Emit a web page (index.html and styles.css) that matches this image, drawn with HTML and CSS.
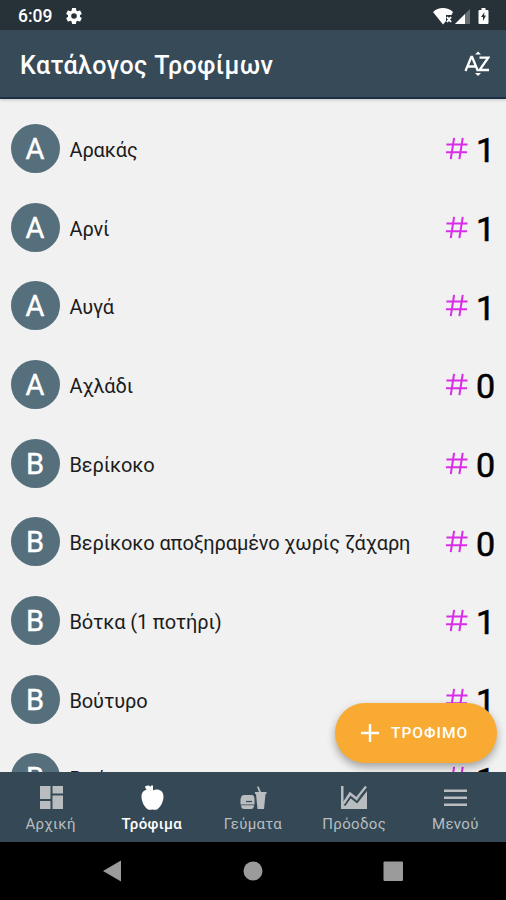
FILE: index.html
```
<!DOCTYPE html>
<html lang="el">
<head>
<meta charset="utf-8">
<title>Κατάλογος Τροφίμων</title>
<link rel="stylesheet" href="styles.css">
</head>
<body>
<svg class="defs" width="0" height="0">
  <symbol id="hash" viewBox="0 0 24 24"><path d="M9.500 1 6 23M18.500 1 15 23M1.500 7.800h22M1 16h22" fill="none" stroke="currentColor" stroke-width="2.100"/></symbol>
</svg>
<div class="status">
  <span class="clock">6:09</span>
  <svg class="gear" viewBox="2 2 20 20"><path d="M19.43 12.98c.04-.32.07-.64.07-.98s-.03-.66-.07-.98l2.11-1.65c.19-.15.24-.42.12-.64l-2-3.46c-.12-.22-.39-.3-.61-.22l-2.49 1c-.52-.4-1.08-.73-1.69-.98l-.38-2.65C14.46 2.18 14.25 2 14 2h-4c-.25 0-.46.18-.49.42l-.38 2.65c-.61.25-1.17.59-1.69.98l-2.49-1c-.23-.09-.49 0-.61.22l-2 3.46c-.13.22-.07.49.12.64l2.11 1.65c-.04.32-.07.65-.07.98s.03.66.07.98l-2.11 1.65c-.19.15-.24.42-.12.64l2 3.46c.12.22.39.3.61.22l2.49-1c.52.4 1.08.73 1.69.98l.38 2.65c.03.24.24.42.49.42h4c.25 0 .46-.18.49-.42l.38-2.65c.61-.25 1.17-.59 1.69-.98l2.49 1c.23.09.49 0 .61-.22l2-3.46c.12-.22.07-.49-.12-.64zM12 15.5a3.5 3.5 0 1 1 0-7 3.5 3.5 0 0 1 0 7z"/></svg>
  <svg class="signals" viewBox="0 0 58 18"><path d="M0 5C5-.2 15-.2 20 5l-1.500 3H13v6l-3 3.500z"/><path d="m14 10 4 5m0-5-4 5" stroke="#fff" stroke-width="2"/><path d="M22 17 37 2v15z" opacity=".3"/><path d="M22 17 32 7v10z"/><path d="M48.500 1h4v2h2q1 0 1 1v12q0 1-1 1h-8q-1 0-1-1V4q0-1 1-1h2z"/><path d="m51.500 5-3.500 5h2v4l3-5.500h-2z" fill="#263238"/></svg>
</div>
<header class="appbar">
  <h1>Κατάλογος Τροφίμων</h1>
  <svg class="sort" viewBox="0 0 26 26"><path d="M1.500 20 7.300 6h.8l5.800 14M3.800 15.500h7.800M15.500 6.700h8.700L15.500 19h9.500" fill="none" stroke="#fff" stroke-width="2.300"/><path d="m11 3.500 3-3 3 3zM11 22l3 3 3-3z" fill="#fff"/></svg>
</header>
<main class="foods">
  <div class="row"><span class="avatar">A</span><span class="name">Αρακάς</span><svg class="hash"><use href="#hash"/></svg><span class="count">1</span></div>
  <div class="row"><span class="avatar">A</span><span class="name">Αρνί</span><svg class="hash"><use href="#hash"/></svg><span class="count">1</span></div>
  <div class="row"><span class="avatar">A</span><span class="name">Αυγά</span><svg class="hash"><use href="#hash"/></svg><span class="count">1</span></div>
  <div class="row"><span class="avatar">A</span><span class="name">Αχλάδι</span><svg class="hash"><use href="#hash"/></svg><span class="count">0</span></div>
  <div class="row"><span class="avatar">B</span><span class="name">Βερίκοκο</span><svg class="hash"><use href="#hash"/></svg><span class="count">0</span></div>
  <div class="row"><span class="avatar">B</span><span class="name">Βερίκοκο αποξηραμένο χωρίς ζάχαρη</span><svg class="hash"><use href="#hash"/></svg><span class="count">0</span></div>
  <div class="row"><span class="avatar">B</span><span class="name">Βότκα (1 ποτήρι)</span><svg class="hash"><use href="#hash"/></svg><span class="count">1</span></div>
  <div class="row"><span class="avatar">B</span><span class="name">Βούτυρο</span><svg class="hash"><use href="#hash"/></svg><span class="count">1</span></div>
  <div class="row"><span class="avatar">B</span><span class="name">Βρώμη</span><svg class="hash"><use href="#hash"/></svg><span class="count">1</span></div>
  <button class="fab"><svg viewBox="0 0 18 18"><path d="M9 0v18M0 9h18" stroke="#fff" stroke-width="2.400"/></svg><span>ΤΡΟΦΙΜΟ</span></button>
</main>
<nav class="tabs">
  <a class="tab"><svg viewBox="0 0 28 28"><path d="M3 3h10.500v13H3zM15.500 3H26v7.500H15.500zM3 18h10.500v8H3zM15.500 12.500H26V26H15.500z"/></svg><span>Αρχική</span></a>
  <a class="tab active"><svg viewBox="0 0 28 28"><path d="M13 7c-2.500 1-5.500 0-6-3.500 3-2 5.500-1 6 .5V2.500h2v5c3.500-2 10.500-1 10.500 6 0 5-3 11-6.500 13-1.500.8-3 0-4.500 0s-3 .8-4.500 0c-3.500-2-6.500-8-6.500-13 0-6 5-8 9.500-6z"/></svg><span>Τρόφιμα</span></a>
  <a class="tab"><svg viewBox="0 0 28 28"><path d="M5 12h8q2 0 2.500 3.500H2Q2 12 5 12zM1.500 15.500h14v6h-14zM2 22.300h13q0 3.700-3 3.700H5q-3 0-3-3.700z"/><path d="M16 9h4l-2-5 1.500-.8L22 9h5.500v2h-1L25 26h-6.500L17 11h-1z"/><path d="M7 18.500h6" stroke="#344955" stroke-width="1.200"/></svg><span>Γεύματα</span></a>
  <a class="tab"><svg viewBox="0 0 28 28"><path d="M1 3h2.500v17.500L10 12l6.500 5L27 7.500V26H1z"/><path d="m4.500 22.500 6-8.500 6.500 5.200L27 6.500" fill="none" stroke="#344955" stroke-width="2"/><path d="m3.500 20.500 6.500-10 6.500 5L26 3.500" fill="none" stroke="currentColor" stroke-width="2.300"/></svg><span>Πρόοδος</span></a>
  <a class="tab"><svg viewBox="0 0 28 28"><path d="M3 6.500h23V9H3zm0 7h23V16H3zm0 7h23V23H3z"/></svg><span>Μενού</span></a>
</nav>
<footer class="system">
  <svg viewBox="0 0 24 24"><path d="M20 1.500v21L2 12z"/></svg>
  <svg viewBox="0 0 24 24"><circle cx="12" cy="12" r="9.500"/></svg>
  <svg viewBox="0 0 24 24"><rect x="2.500" y="2.500" width="19.500" height="19.500" rx="1"/></svg>
</footer>
</body>
</html>
```
FILE: styles.css
```
* { box-sizing: border-box; }
body {
  margin: 0;
  width: 506px;
  height: 900px;
  overflow: hidden;
  display: flex;
  flex-direction: column;
  background: #f1f1f1;
  font-family: Roboto, "Noto Sans", sans-serif;
}
.defs { display: none; }
.status {
  flex: none;
  height: 30px;
  display: flex;
  align-items: center;
  padding: 1px 15px 0 18px;
  background: #263238;
  color: #fff;
  fill: #fff;
}
.clock { font-size: 17.500px; font-weight: 500; }
.gear { width: 16px; height: 16px; margin-left: 14px; }
.signals { width: 58px; height: 18px; margin-left: auto; }
.appbar {
  flex: none;
  height: 69px;
  display: flex;
  align-items: center;
  justify-content: space-between;
  padding: 0 16px 0 20px;
  background: #374a57;
  border-bottom: 2px solid #1b3044;
  box-shadow: 0 1px 3px #0003;
}
h1 { margin: 5px 0 0; color: #fff; font-size: 25px; line-height: 30px; font-weight: 500; letter-spacing: .4px; }
.sort { width: 26px; height: 26px; }
.foods {
  flex: 1;
  min-height: 0;
  overflow: hidden;
  position: relative;
  padding-top: 10px;
}
.row {
  height: 78.700px;
  display: flex;
  align-items: center;
  padding: 0 10px;
}
.avatar {
  width: 49px;
  height: 49px;
  margin-left: .5px;
  border-radius: 50%;
  background: #566f7c;
  color: #fff;
  font-size: 29px;
  line-height: 51px;
  text-align: center;
  -webkit-text-stroke: .4px #fff;
}
.name { margin-left: 10px; font-size: 20px; letter-spacing: -.130px; color: #1c1c1c; padding-top: 3px; white-space: nowrap; }
.hash { width: 23px; height: 23px; margin-left: auto; color: #d92ce8; }
.count { width: 20px; margin-left: 8px; font-size: 34px; line-height: 40px; font-weight: 400; -webkit-text-stroke: .6px #000; padding-top: 4px; }
.fab {
  position: absolute;
  left: 335px;
  bottom: 9px;
  width: 162px;
  height: 60px;
  display: flex;
  align-items: center;
  gap: 12px;
  padding: 0 0 0 26px;
  border: 0;
  border-radius: 30px;
  background: #f9aa33;
  color: #fff;
  font: 500 15.500px Roboto, sans-serif;
  letter-spacing: 1px;
  box-shadow: 0 4px 8px #0005;
}
.fab svg { width: 18px; height: 18px; }
.tabs {
  flex: none;
  height: 70px;
  display: grid;
  grid-template-columns: repeat(5, 1fr);
  background: #344955;
  position: relative;
}
.tab {
  display: flex;
  flex-direction: column;
  align-items: center;
  padding-top: 11px;
  color: #b9bdc0;
  fill: currentColor;
  font-size: 15px;
  line-height: 20px;
  letter-spacing: .350px;
}
.tab svg { width: 28px; height: 28px; }
.tab span { margin-top: 3px; white-space: nowrap; }
.active { color: #fff; font-weight: 500; }
.system {
  flex: none;
  height: 58px;
  display: flex;
  align-items: center;
  justify-content: center;
  gap: 116px;
  background: #000;
  fill: #9b9b9b;
}
.system svg { width: 24px; height: 24px; }
```
